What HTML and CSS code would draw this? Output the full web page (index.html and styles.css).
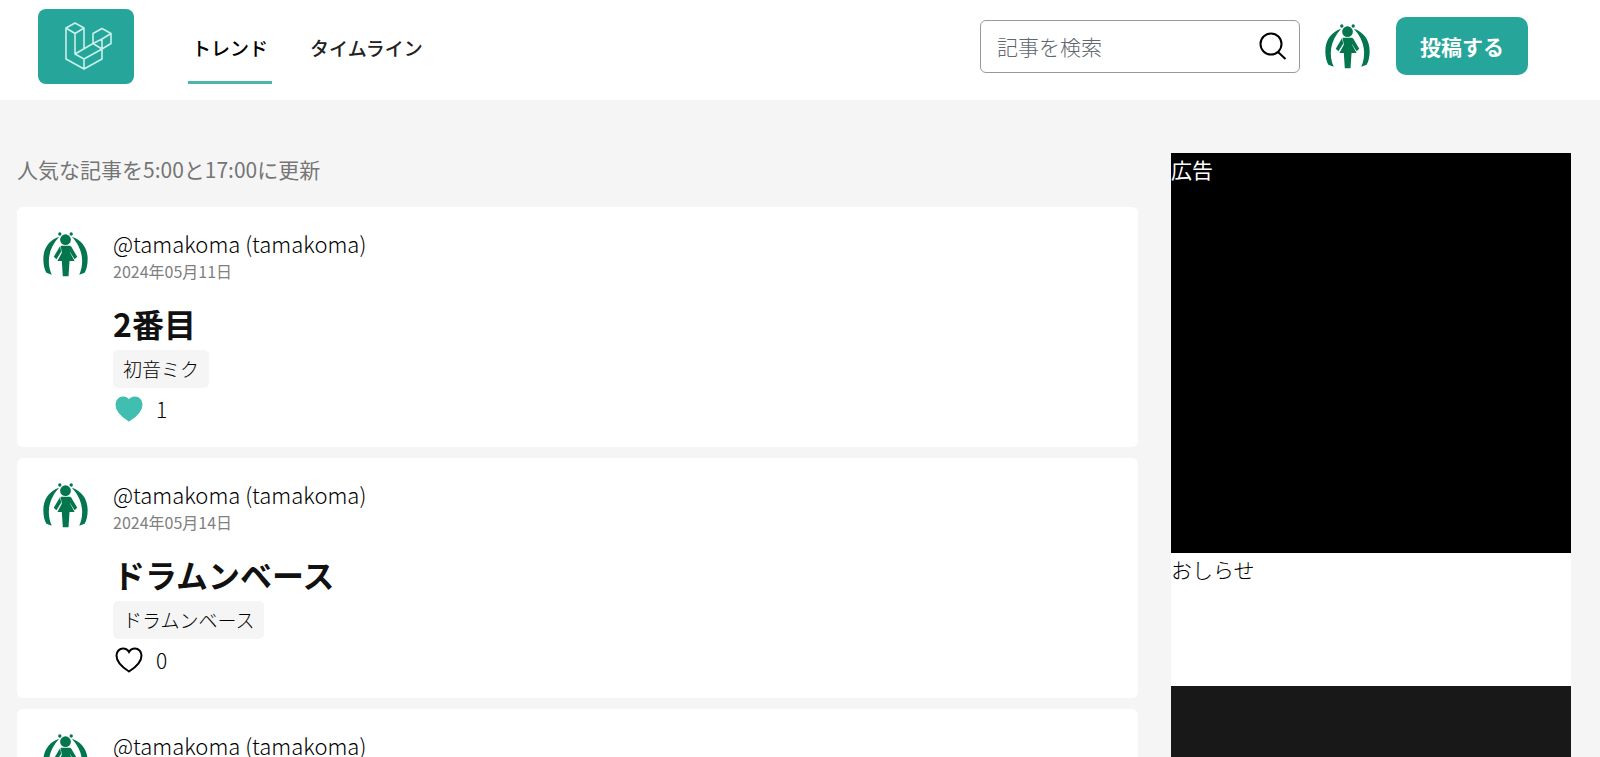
FILE: index.html
```html
<!DOCTYPE html>
<html lang="ja">
<head>
<meta charset="utf-8">
<meta name="viewport" content="width=device-width, initial-scale=1">
<title>トレンド</title>
<link rel="stylesheet" href="styles.css">
</head>
<body>
<svg class="sprite" aria-hidden="true">
  <symbol id="avatar" viewBox="0 0 134 134">
    <circle cx="67" cy="23" r="16"/>
    <circle cx="50" cy="6" r="5"/>
    <circle cx="84" cy="6" r="5"/>
    <path d="M48 14C20 23 1 47 1 80c0 17 3 32 9 41l16 6C11 94 14 50 48 14z"/>
    <path d="M86 14c28 9 47 33 47 66 0 17-3 32-9 41l-16 6c15-33 12-77-22-113z"/>
    <path d="M53 41h28l3 4-3 17 13 24H79l-3 46H59l-3-46H43l13-24-3-17z"/>
    <path d="M51 42L32 74l8 7 14-22zM83 42l19 32-8 7-14-22z"/>
  </symbol>
  <symbol id="heart" viewBox="0 0 28 26">
    <path d="M14 24.500C10 22 1.500 15.500 1.500 8.500 1.500 4.500 4.500 1.500 8 1.500c2.600 0 4.800 1.300 6 3.500 1.200-2.200 3.400-3.500 6-3.500 3.500 0 6.500 3 6.500 7 0 7-8.500 13.500-12.500 16z"/>
  </symbol>
</svg>

<header class="header">
  <a class="logo" href="#" aria-label="ホーム">
    <svg viewBox="65 22 48 48" aria-hidden="true">
      <path d="M66 28l9-5 9 5-9 5.500zM66 28v31l18 10 18-10V49M84 28v20.500M75 33.500V54l9 5v10M75 54l18-10.500 9 5.500-18 10M93 43.500v-10l9-5 9 5-9 5.500zM102 39v10M111 33.500v10l-9 5.500"/>
    </svg>
  </a>
  <nav class="nav">
    <a class="nav-link active" href="#">トレンド</a>
    <a class="nav-link" href="#">タイムライン</a>
  </nav>
  <form class="search">
    <input class="search-input" type="text" placeholder="記事を検索" aria-label="記事を検索">
    <button class="search-button" type="button" aria-label="検索">
      <svg viewBox="0 0 28 28" aria-hidden="true"><circle cx="12" cy="12" r="10.500"/><path d="M19 20l7.500 7"/></svg>
    </button>
  </form>
  <a class="profile" href="#" aria-label="プロフィール"><svg class="avatar"><use href="#avatar"/></svg></a>
  <button class="post-button" type="button">投稿する</button>
</header>

<main class="page">
  <section class="feed">
    <p class="notice">人気な記事を5:00と17:00に更新</p>
    <article class="card">
      <svg class="avatar" aria-hidden="true"><use href="#avatar"/></svg>
      <div class="card-body">
        <a class="user" href="#">@tamakoma (tamakoma)</a>
        <time class="date" datetime="2024-05-11">2024年05月11日</time>
        <h2 class="title">2番目</h2>
        <a class="tag" href="#">初音ミク</a>
        <button class="like liked" type="button" aria-label="いいね 1"><svg class="heart"><use href="#heart"/></svg>1</button>
      </div>
    </article>
    <article class="card">
      <svg class="avatar" aria-hidden="true"><use href="#avatar"/></svg>
      <div class="card-body">
        <a class="user" href="#">@tamakoma (tamakoma)</a>
        <time class="date" datetime="2024-05-14">2024年05月14日</time>
        <h2 class="title">ドラムンベース</h2>
        <a class="tag" href="#">ドラムンベース</a>
        <button class="like" type="button" aria-label="いいね 0"><svg class="heart"><use href="#heart"/></svg>0</button>
      </div>
    </article>
    <article class="card">
      <svg class="avatar" aria-hidden="true"><use href="#avatar"/></svg>
      <div class="card-body">
        <a class="user" href="#">@tamakoma (tamakoma)</a>
      </div>
    </article>
  </section>
  <aside class="side">
    <div class="ad">広告</div>
    <div class="news">おしらせ</div>
    <div class="extra"></div>
  </aside>
</main>
</body>
</html>
```
FILE: styles.css
```css
* {
  box-sizing: border-box;
}

body {
  margin: 0;
  height: 100vh;
  overflow: hidden;
  background: #f5f5f5;
  color: #000;
  font-family: "Noto Sans CJK JP", sans-serif;
  font-size: 21px;
  font-weight: 300;
  line-height: 32px;
}

a {
  color: inherit;
  text-decoration: none;
}

button,
input {
  margin: 0;
  padding: 0;
  border: 0;
  background: none;
  color: inherit;
  font: inherit;
}

button {
  cursor: pointer;
}

.sprite {
  position: absolute;
  width: 0;
  height: 0;
}

.header {
  display: flex;
  align-items: center;
  height: 100px;
  padding: 0 72px 8px 38px;
  background: #fff;
}

.logo {
  display: flex;
  align-items: center;
  justify-content: center;
  width: 96px;
  height: 75px;
  padding-left: 5px;
  border-radius: 8px;
  background: #26a69a;
}

.logo svg {
  width: 48px;
  height: 48px;
  fill: none;
  stroke: #c8f0ea;
  stroke-width: 1.6;
  stroke-linejoin: round;
}

.nav {
  display: flex;
  gap: 34px;
  margin: 5px auto 0 54px;
}

.nav-link {
  padding: 18px 4px 17px;
  border-bottom: 3px solid transparent;
  color: #222;
  font-size: 19px;
  font-weight: 500;
}

.nav-link.active {
  border-color: #4db6ac;
  color: #000;
}

.search {
  display: flex;
  align-items: center;
  width: 320px;
  height: 53px;
  padding: 0 12px 0 16px;
  border: 1px solid #999;
  border-radius: 6px;
}

.search-input {
  flex: 1;
  min-width: 0;
  outline: 0;
}

.search-input::placeholder {
  color: #5f686f;
  opacity: 1;
}

.search-button svg {
  display: block;
  width: 28px;
  height: 28px;
  fill: none;
  stroke: #000;
  stroke-width: 2;
}

.avatar {
  display: block;
  flex: none;
  width: 45px;
  height: 45px;
  fill: #04764e;
}

.profile {
  margin: 0 26px 0 25px;
}

.post-button {
  height: 58px;
  padding: 0 24px;
  border-radius: 10px;
  background: #26a69a;
  color: #fff;
  font-weight: 700;
}

.page {
  display: grid;
  grid-template-columns: minmax(0, 1fr) 400px;
  gap: 33px;
  padding: 53px 29px 0 17px;
}

.feed {
  display: flex;
  flex-direction: column;
  gap: 11px;
}

.notice {
  margin: 0 0 11px;
  color: #757575;
  font-weight: 400;
}

.card {
  display: flex;
  gap: 25px;
  min-height: 240px;
  padding: 25px 26px 22px;
  border-radius: 6px;
  background: #fff;
}

.card-body {
  display: flex;
  flex-direction: column;
  align-items: flex-start;
  margin-top: -5px;
}

.user {
  font-size: 22px;
}

.date {
  color: #808080;
  font-size: 16px;
  font-weight: 400;
  line-height: 24px;
}

.title {
  margin: 16px 0 3px;
  color: #111;
  font-size: 32px;
  font-weight: 700;
  line-height: 48px;
}

.tag {
  padding: 3px 10px;
  border-radius: 5px;
  background: #f5f5f5;
  font-size: 19px;
}

.like {
  display: flex;
  align-items: center;
  gap: 13px;
  margin-top: 5px;
  padding-left: 2px;
}

.heart {
  width: 28px;
  height: 26px;
  fill: none;
  stroke: #000;
  stroke-width: 2;
}

.liked .heart {
  fill: #40bfb0;
  stroke: #40bfb0;
}

.ad {
  height: 400px;
  background: #000;
  color: #fff;
  font-weight: 400;
}

.news {
  height: 133px;
  background: #fff;
}

.extra {
  height: 400px;
  background: #181818;
}
```
